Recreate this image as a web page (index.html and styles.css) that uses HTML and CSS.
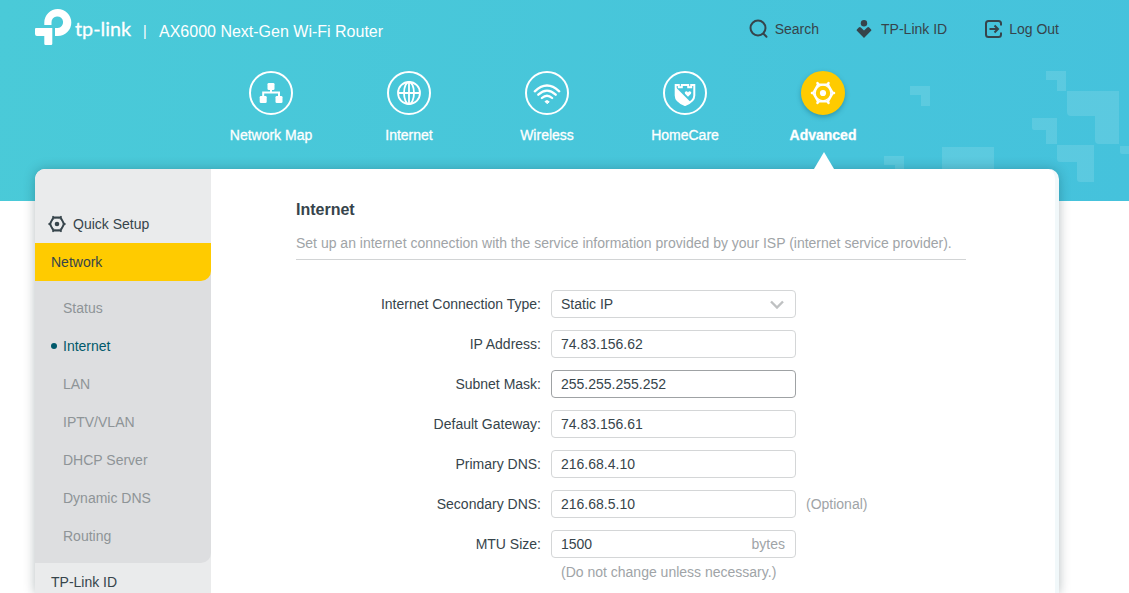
FILE: index.html
```html
<!DOCTYPE html>
<html lang="en">
<head>
    <meta charset="UTF-8">
    <meta name="viewport" content="width=device-width, initial-scale=1.0">
    <title>AX6000 Next-Gen Wi-Fi Router</title>
    <link rel="stylesheet" href="styles.css">
</head>
<body>
    <header class="header">
        <svg class="header-pattern" width="250" height="140" viewBox="880 62 250 140">
            <path d="M910 86h20v20h-9v-11h-11z"/>
            <path d="M1046 71h20v20h-9v-11h-11z"/>
            <path d="M1067 91h52v53h-20q-4 0-4-4v-24h-24q-4 0-4-4z"/>
            <path d="M1032 118h25v26h-11v-14h-12q-2 0-2-2z"/>
            <path d="M1057 145h37v37h-14q-3 0-3-3v-17h-17q-3 0-3-3z"/>
            <path d="M1120 146h10v8h-8q-2 0-2-2z"/>
            <path d="M942 147h52v30h-52z"/>
            <path d="M884 156h20v20h-9v-11h-11z"/>
        </svg>

        <div class="top-bar">
            <div class="brand">
                <svg class="logo" width="98" height="40" viewBox="34 7 98 40">
                    <path d="M44.3 25v-2.5a13.5 13.5 0 1 1 13.5 13.5H55v-8h2.8a5.8 5.8 0 1 0-6.3-5.500V25z"/>
                    <path d="M36 28h16.3v15.800q0 1.200-1.200 1.200h-5.600q-1.200 0-1.200-1.200V36H37q-2 0-2-2v-5q0-1 1-1z"/>
                    <text class="logo-text" x="75" y="36" textLength="56" lengthAdjust="spacingAndGlyphs">tp-link</text>
                </svg>
                <span class="brand-divider">|</span>
                <span class="model">AX6000 Next-Gen Wi-Fi Router</span>
            </div>
            <div class="top-links">
                <a class="top-link search" href="#">
                    <svg width="20" height="20" viewBox="0 0 20 20" fill="none" stroke="currentColor" stroke-width="2" stroke-linecap="round">
                        <circle cx="9" cy="9" r="7.5"/>
                        <path d="M14.5 14.8l3 3"/>
                    </svg>
                    Search
                </a>
                <a class="top-link cloud" href="#">
                    <svg width="18" height="20" viewBox="0 0 18 20" fill="currentColor">
                        <circle cx="9" cy="4.2" r="3.2"/>
                        <path d="M9 11.5l3.2-3q1-.9 2 0l1.9 1.9q.7.7 0 1.4L9 19l-7.1-7.2q-.7-.7 0-1.4l1.9-1.9q1-.9 2 0z"/>
                    </svg>
                    TP-Link ID
                </a>
                <a class="top-link logout" href="#">
                    <svg width="20" height="20" viewBox="0 0 20 20" fill="none" stroke="currentColor" stroke-width="2">
                        <path d="M18 6.5V4.500Q18 2 15.500 2h-10Q3 2 3 4.500v11Q3 18 5.500 18h10q2.500 0 2.500-2.500v-2"/>
                        <path d="M6.500 10H15M11.500 6.500L15 10l-3.500 3.500"/>
                    </svg>
                    Log Out
                </a>
            </div>
        </div>

        <nav class="main-nav">
            <a class="nav-item" href="#">
                <span class="nav-icon">
                    <svg width="28" height="28" viewBox="0 0 28 28" fill="#fff">
                        <rect x="10.5" y="4" width="7" height="7" rx="1.3"/>
                        <rect x="2.7" y="17" width="7" height="7" rx="1.3"/>
                        <rect x="18.5" y="17" width="7" height="7" rx="1.3"/>
                        <path d="M14 10v4M6.2 18v-4.500H22V18" fill="none" stroke="#fff" stroke-width="2"/>
                    </svg>
                </span>
                Network Map
            </a>
            <a class="nav-item" href="#">
                <span class="nav-icon">
                    <svg width="28" height="28" viewBox="0 0 28 28" fill="none" stroke="#fff" stroke-width="1.8">
                        <circle cx="14" cy="14" r="11"/>
                        <ellipse cx="14" cy="14" rx="5" ry="11"/>
                        <path d="M14 3v22M3 14h22"/>
                    </svg>
                </span>
                Internet
            </a>
            <a class="nav-item" href="#">
                <span class="nav-icon">
                    <svg width="28" height="28" viewBox="0 0 28 28" fill="none" stroke="#fff" stroke-width="2.3" stroke-linecap="round">
                        <path d="M1.8 12.3q12.200-11.600 24.400 0M5.300 15.700q8.700-8.200 17.400 0M8.900 19q5.100-4.600 10.200 0"/>
                        <path d="M14 24.500l-2-2q2-1.800 4 0z" fill="#fff" stroke-width="1"/>
                    </svg>
                </span>
                Wireless
            </a>
            <a class="nav-item" href="#">
                <span class="nav-icon">
                    <svg width="28" height="28" viewBox="0 0 28 28">
                        <path d="M4.700 6v10.500q0 6 9.300 9.500 9.300-3.500 9.300-9.500V6h-3.100v2.200h-3V6h-6.400v2.200h-3V6z" fill="none" stroke="#fff" stroke-width="2"/>
                        <path d="M5 8.500L19.500 23 14 26q-9.300-3.500-9.300-9.500z" fill="#fff"/>
                        <path d="M17 17.800l-3-3q-1-2 1-2.600 1.400-.1 2 1.200.6-1.300 2-1.200 2 .6 1 2.600z" fill="#fff"/>
                    </svg>
                </span>
                HomeCare
            </a>
            <a class="nav-item active" href="#">
                <span class="nav-icon">
                    <svg width="28" height="28" viewBox="0 0 28 28" fill="none" stroke="#fff">
                        <path d="M9 5.500h10l4.800 8.500-4.800 8.500H9L4.200 14z" stroke-width="2.2"/>
                        <path d="M8.500 4.200l.8 1.400M19.500 4.200l-.8 1.400M23.800 14H25M19.500 23.800l-.8-1.400M8.500 23.800l.8-1.400M4.200 14H3" stroke-width="2.6" stroke-linecap="round"/>
                        <circle cx="14" cy="14" r="3.1" fill="#fff" stroke="none"/>
                        <circle cx="14" cy="14" r="7.8" stroke-width="1.2"/>
                    </svg>
                </span>
                Advanced
            </a>
        </nav>
    </header>

    <div class="container">
        <aside class="sidebar">
            <a class="menu-item quick-setup" href="#">
                <svg width="18" height="18" viewBox="0 0 18 18" fill="none" stroke="currentColor">
                    <path d="M5.400 2.500h7.200L16.200 9l-3.600 6.500H5.400L1.800 9z" stroke-width="1.8"/>
                    <path d="M5 1.700l.6 1M13 1.700l-.6 1M16.400 9h.7M13 16.300l-.6-1M5 16.300l.6-1M1.600 9H.9" stroke-width="1.6" stroke-linecap="round"/>
                    <circle cx="9" cy="9" r="2.3" fill="currentColor" stroke="none"/>
                    <circle cx="9" cy="9" r="5.9" stroke-width=".5"/>
                </svg>
                Quick Setup
            </a>
            <div class="menu-group">
                <a class="menu-item selected" href="#">Network</a>
                <ul class="submenu">
                    <li><a href="#">Status</a></li>
                    <li class="current"><a href="#">Internet</a></li>
                    <li><a href="#">LAN</a></li>
                    <li><a href="#">IPTV/VLAN</a></li>
                    <li><a href="#">DHCP Server</a></li>
                    <li><a href="#">Dynamic DNS</a></li>
                    <li><a href="#">Routing</a></li>
                </ul>
            </div>
            <a class="menu-item" href="#">TP-Link ID</a>
        </aside>

        <main class="content">
            <h1>Internet</h1>
            <p class="description">Set up an internet connection with the service information provided by your ISP (internet service provider).</p>

            <form class="settings">
                <div class="form-row">
                    <label>Internet Connection Type:</label>
                    <div class="field">
                        <span>Static IP</span>
                        <svg class="chevron" width="14" height="9" viewBox="0 0 14 9" fill="none" stroke="#bfc1c2" stroke-width="2.4">
                            <path d="M1 1.500l6 6 6-6"/>
                        </svg>
                    </div>
                </div>
                <div class="form-row">
                    <label>IP Address:</label>
                    <div class="field"><span>74.83.156.62</span></div>
                </div>
                <div class="form-row">
                    <label>Subnet Mask:</label>
                    <div class="field hovered"><span>255.255.255.252</span></div>
                </div>
                <div class="form-row">
                    <label>Default Gateway:</label>
                    <div class="field"><span>74.83.156.61</span></div>
                </div>
                <div class="form-row">
                    <label>Primary DNS:</label>
                    <div class="field"><span>216.68.4.10</span></div>
                </div>
                <div class="form-row">
                    <label>Secondary DNS:</label>
                    <div class="field"><span>216.68.5.10</span></div>
                    <span class="hint">(Optional)</span>
                </div>
                <div class="form-row">
                    <label>MTU Size:</label>
                    <div class="field"><span>1500</span><span class="unit">bytes</span></div>
                </div>
                <p class="note">(Do not change unless necessary.)</p>
            </form>
        </main>
    </div>
</body>
</html>
```

FILE: styles.css
```css
* {
    margin: 0;
    padding: 0;
    box-sizing: border-box;
}

body {
    font-family: "Liberation Sans", Arial, sans-serif;
    font-size: 14px;
    line-height: 16px;
    color: #36444b;
    background: #fff;
    height: 100vh;
    overflow: hidden;
}

a {
    color: inherit;
    text-decoration: none;
}

/* Header */
.header {
    position: relative;
    height: 201px;
    background: linear-gradient(100deg, #4acad8 0%, #45c2dc 100%);
}

.header-pattern {
    position: absolute;
    right: -1px;
    bottom: -1px;
    fill: rgba(255, 255, 255, 0.12);
}

.top-bar {
    position: relative;
    display: flex;
    justify-content: space-between;
    padding: 7px 70px 0 34px;
    height: 71px;
}

.brand {
    display: flex;
    align-items: flex-start;
    color: #fff;
}

.logo {
    fill: #fff;
}

.logo-text {
    font-family: Lato, sans-serif;
    font-size: 20px;
    stroke: #fff;
    stroke-width: 0.3px;
}

.brand-divider {
    width: 4px;
    margin: 16px 12px 0 11px;
}

.model {
    font-size: 16px;
    line-height: 18px;
    margin-top: 16px;
}

.top-links {
    display: flex;
    height: 20px;
    margin-top: 12px;
}

.top-link {
    display: flex;
    align-items: center;
    gap: 6px;
}

.search {
    margin-right: 36px;
}

.cloud {
    gap: 8px;
    margin-right: 36px;
}

/* Main navigation, sits above the panel so its shadow stays off the pointer */
.main-nav {
    position: relative;
    z-index: 2;
    display: flex;
    padding-left: 202px;
}

.nav-item {
    width: 138px;
    height: 98px;
    display: flex;
    flex-direction: column;
    align-items: center;
    gap: 12px;
    color: #fff;
    -webkit-text-stroke: 0.3px #fff;
}

.nav-icon {
    width: 44px;
    height: 44px;
    display: flex;
    align-items: center;
    justify-content: center;
    border: 2px solid #fff;
    border-radius: 50%;
}

.nav-item.active {
    position: relative;
    font-weight: bold;
}

.active .nav-icon {
    background: #ffcb00;
    border-color: #ffcb00;
    box-shadow: 0 2px 5px rgba(0, 70, 90, 0.35);
}

.nav-item.active::after {
    content: "";
    position: absolute;
    bottom: 0;
    left: 60px;
    border: 10px solid transparent;
    border-top: 0;
    border-bottom: 17px solid #fff;
}

/* Page panel */
.container {
    position: relative;
    display: flex;
    width: 1024px;
    height: calc(100vh - 169px);
    margin: -32px 0 0 35px;
    background: #fff;
    border-right: 4px solid #f1f8fa;
    border-radius: 10px 10px 0 0;
    box-shadow: 0 0 12px rgba(0, 30, 40, 0.25), 0 12px 12px rgba(0, 30, 40, 0.04);
}

.sidebar {
    width: 176px;
    padding-top: 36px;
    overflow: hidden;
    background: #eaebec;
    border-top-left-radius: 10px;
}

.menu-item {
    display: flex;
    align-items: center;
    height: 38px;
    padding-left: 16px;
}

.quick-setup {
    gap: 7px;
    padding-left: 13px;
}

.menu-group {
    background: #dddee0;
    border-bottom-right-radius: 10px;
}

.menu-item.selected {
    background: #ffcb00;
    border-bottom-right-radius: 10px;
}

.submenu {
    list-style: none;
    padding: 8px 0 8px 16px;
    color: #8e9497;
}

.submenu li {
    display: flex;
    align-items: center;
    height: 38px;
    padding-left: 12px;
}

.submenu .current {
    gap: 6px;
    padding-left: 0;
    color: #00596b;
}

.current::before {
    content: "";
    width: 6px;
    height: 6px;
    border-radius: 50%;
    background: #00596b;
}

/* Content */
.content {
    width: 755px;
    padding: 32px 0 0 85px;
}

.content h1 {
    font-size: 16px;
    line-height: 18px;
}

.description {
    height: 41px;
    padding-top: 16px;
    border-bottom: 1px solid #d2d4d5;
    color: #a0a4a7;
    white-space: nowrap;
}

.settings {
    display: flex;
    flex-direction: column;
    gap: 12px;
    padding-top: 30px;
}

.form-row {
    display: flex;
    align-items: center;
    height: 28px;
}

.form-row label {
    width: 245px;
    margin-right: 10px;
    text-align: right;
}

.field {
    display: flex;
    align-items: center;
    justify-content: space-between;
    width: 245px;
    height: 28px;
    padding: 0 10px 0 9px;
    border: 1px solid #d4d6d7;
    border-radius: 4px;
}

.field.hovered {
    border-color: #9fa2a4;
}

.chevron {
    margin-right: 1px;
}

.hint,
.unit,
.note {
    color: #a0a4a7;
}

.hint {
    margin-left: 10px;
}

.note {
    margin: -6px 0 0 265px;
}
```
